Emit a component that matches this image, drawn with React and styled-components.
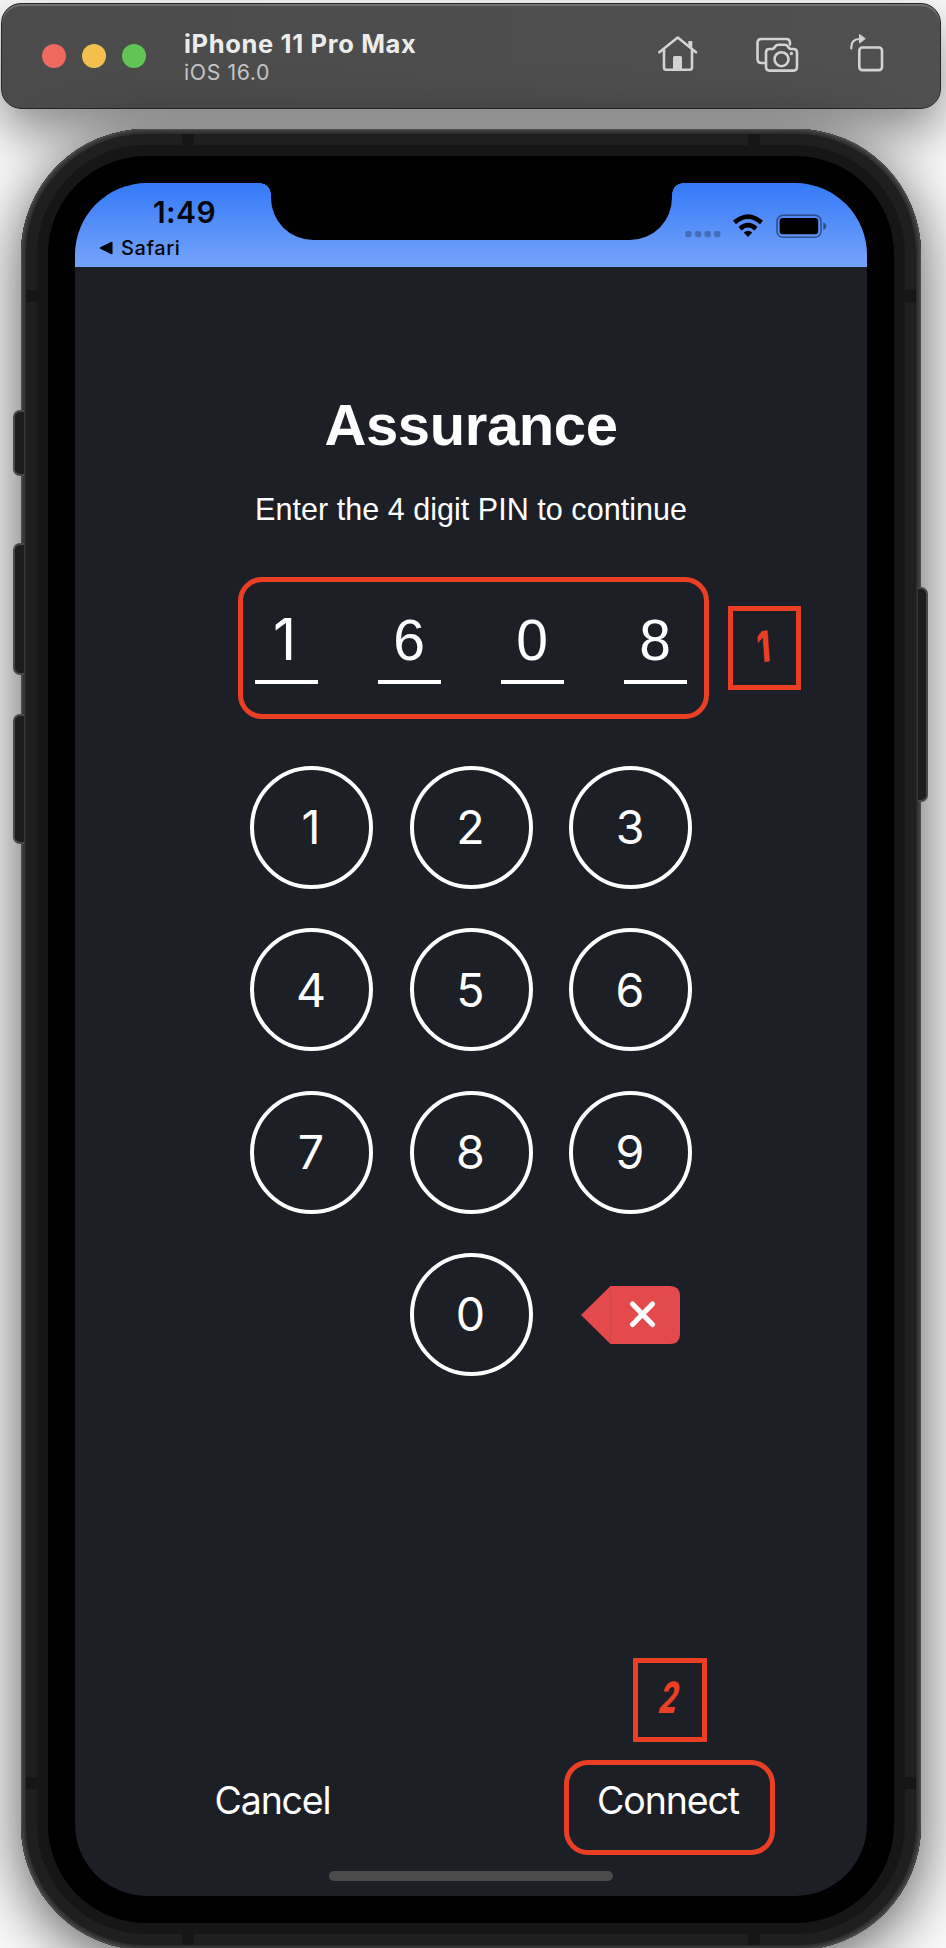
import React from "react";
import styled, { createGlobalStyle } from "styled-components";

const RED = "#eb3f24";
const UI = 'Inter, "Liberation Sans", sans-serif';
const HELV = '"Liberation Sans", Arial, sans-serif';

const GlobalStyle = createGlobalStyle`
  *, *::before, *::after { box-sizing: border-box; }
  body { margin: 0; background: #fafafa; }
  button { font: inherit; color: inherit; background: none; border: 0; padding: 0; margin: 0; }
`;

const Desktop = styled.main`
  width: 946px;
  height: 1948px;
  overflow: hidden;
  padding-top: 3px;
  background: #fafafa;
  font-family: ${UI};
  color: #fff;
`;

const Toolbar = styled.header`
  display: flex;
  align-items: center;
  width: 940px;
  height: 106px;
  margin-left: 1px;
  padding: 0 56px 0 40px;
  border: 1px solid #262626;
  border-radius: 20px;
  background: linear-gradient(90deg, #4b4b4b, #505050);
  box-shadow: inset 0 2px 1px #747474, 0 22px 50px rgba(0, 0, 0, 0.45);
`;

const Lights = styled.div`
  display: flex;
  gap: 16px;
`;

const Light = styled.span`
  width: 24px;
  height: 24px;
  border-radius: 50%;
  background: ${(p) => p.$color};
`;

const Titles = styled.div`
  display: flex;
  flex-direction: column;
  margin: 2px auto 0 38px;
  white-space: nowrap;
`;

const DeviceName = styled.span`
  font-size: 25.5px;
  line-height: 29px;
  font-weight: 700;
  letter-spacing: 0.65px;
  color: #ececec;
`;

const OsName = styled.span`
  font-size: 21.3px;
  line-height: 28px;
  letter-spacing: 0.6px;
  color: #c6c6c6;
`;

const Tools = styled.div`
  display: flex;
  align-items: center;
  padding-bottom: 4px;
`;

const ToolIcon = styled.svg`
  display: block;
  width: ${(p) => p.$w}px;
  height: 40px;
  margin-left: ${(p) => p.$gap || 0}px;
  fill: none;
  stroke: #d3d3d3;
  stroke-width: 2.6;
  stroke-linecap: round;
  stroke-linejoin: round;
`;

const Phone = styled.section`
  position: relative;
  width: 900px;
  height: 1821px;
  margin: 20px 0 0 21px;
  padding: 54px;
  border-radius: 125px;
  background: #000;
  box-shadow:
    inset 0 0 0 1px #4c4c4c,
    inset 0 0 0 2px #404040,
    inset 0 0 0 4px #353535,
    inset 0 0 0 5px #2a2a2a,
    inset 0 0 0 16px #1f1f1f,
    inset 0 0 0 27px #161616,
    0 12px 62px rgba(0, 0, 0, 0.66);
`;

const SideButton = styled.i`
  position: absolute;
  top: ${(p) => p.$top}px;
  ${(p) => p.$side}: ${(p) => (p.$side === "left" ? -8 : -7)}px;
  width: ${(p) => (p.$side === "left" ? 11 : 10)}px;
  height: ${(p) => p.$h}px;
  border: 2px solid #484848;
  border-${(p) => (p.$side === "left" ? "right" : "left")}: 0;
  border-radius: ${(p) => (p.$side === "left" ? "7px 0 0 7px" : "0 7px 7px 0")};
  background: #1d1d1d;
`;

const Band = styled.i`
  position: absolute;
  background: #161616;
  ${(p) => p.$v}: ${(p) => (p.$flat ? 5 : 161)}px;
  ${(p) => p.$h}: ${(p) => (p.$flat ? 161 : 5)}px;
  width: ${(p) => (p.$flat ? 12 : 11)}px;
  height: ${(p) => (p.$flat ? 11 : 12)}px;
`;

const Screen = styled.div`
  display: flex;
  flex-direction: column;
  align-items: center;
  width: 792px;
  height: 1713px;
  overflow: hidden;
  border-radius: 72px;
  background: #1d1f27;
`;

const StatusBar = styled.div`
  display: flex;
  justify-content: space-between;
  width: 100%;
  height: 84px;
  flex: none;
  background: linear-gradient(#357af8, #75a3f9);
  color: #05070c;
`;

const StatusLeft = styled.div`
  width: 196px;
  padding: 11px 0 0 24px;
`;

const Clock = styled.div`
  padding-left: 54px;
  font-size: 30px;
  line-height: 37px;
  font-weight: 600;
  letter-spacing: 0.4px;
`;

const BackLink = styled.div`
  display: flex;
  align-items: center;
  gap: 8px;
  margin-top: 5px;
  font-size: 20px;
  line-height: 24px;
  font-weight: 500;
  letter-spacing: 0.6px;
`;

const Notch = styled.div`
  position: relative;
  width: 401px;
  height: 57px;
  border-radius: 0 0 42px 42px;
  background: #000;
  &::before, &::after {
    content: "";
    position: absolute;
    top: 0;
    width: 11px;
    height: 11px;
  }
  &::before { left: -11px; background: radial-gradient(circle at 0 100%, transparent 10.5px, #000 11px); }
  &::after { right: -11px; background: radial-gradient(circle at 100% 100%, transparent 10.5px, #000 11px); }
`;

const StatusRight = styled.div`
  width: 195px;
  padding: 29px 0 0 13px;
`;

const StatusIcons = styled.svg`
  display: block;
  width: 145px;
  height: 28px;
`;

const Heading = styled.h1`
  margin: 125px 0 0;
  font: 700 58px/66px ${HELV};
  letter-spacing: -0.4px;
`;

const Hint = styled.p`
  margin: 33px 0 0;
  font: 400 30.5px/36px ${HELV};
  letter-spacing: 0.04px;
  white-space: nowrap;
`;

const PinBox = styled.div`
  display: flex;
  gap: 60px;
  align-self: flex-start;
  width: 471px;
  height: 142px;
  margin: 50px 0 47px 163px;
  padding: 27px 0 0 12px;
  border: 5px solid ${RED};
  border-radius: 24px;
`;

const PinDigit = styled.span`
  width: 63px;
  height: 75px;
  padding-top: 1px;
  border-bottom: 4px solid #fff;
  text-align: center;
  text-indent: ${(p) => (p.$footless ? -4 : -1)}px;
  font: 400 57px/60px ${(p) => (p.$footless ? UI : HELV)};
`;

const Keypad = styled.div`
  display: grid;
  grid-template-columns: repeat(3, 123px);
  grid-auto-rows: 123px;
  gap: 39.4px 36.5px;
`;

const Key = styled.button`
  grid-column: ${(p) => p.$column || "auto"};
  display: flex;
  align-items: center;
  justify-content: center;
  border: 4px solid #fff;
  border-radius: 50%;
  font-size: 46.5px;
  line-height: 1;
  text-indent: -1px;
`;

const DeleteKey = styled.button`
  display: flex;
  align-items: center;
  justify-content: center;
`;

const Actions = styled.div`
  display: flex;
  align-self: flex-start;
  justify-content: space-between;
  width: 570px;
  margin: auto 0 0 130px;
`;

const Action = styled.button`
  width: ${(p) => p.$w}px;
  height: 95px;
  padding-bottom: 14px;
  border: 5px solid ${(p) => (p.$marked ? RED : "transparent")};
  border-radius: 24px;
  font-size: 37.5px;
  line-height: 46px;
  letter-spacing: ${(p) => p.$track}px;
  text-indent: ${(p) => (p.$marked ? -3 : -1)}px;
`;

const HomeIndicator = styled.div`
  width: 284px;
  height: 10px;
  flex: none;
  margin: 16px 0 15px;
  border-radius: 5px;
  background: #4b4b4b;
`;

const Marker = styled.div`
  position: absolute;
  left: ${(p) => p.$x}px;
  top: ${(p) => p.$y}px;
  width: ${(p) => p.$w}px;
  height: 84px;
  display: flex;
  align-items: center;
  justify-content: center;
  border: 5px solid ${RED};
  color: ${RED};
  font: 800 43px/1 ${UI};
`;

const MarkerDigit = styled.span`
  display: block;
  transform: ${(p) => p.$t};
`;

export default function App() {
  return (
    <Desktop>
      <GlobalStyle />
      <Toolbar>
        <Lights>
          <Light $color="#ee6a5f" />
          <Light $color="#f5bf4f" />
          <Light $color="#61c555" />
        </Lights>
        <Titles>
          <DeviceName>iPhone 11 Pro Max</DeviceName>
          <OsName>iOS 16.0</OsName>
        </Titles>
        <Tools>
          <ToolIcon $w={42} viewBox="656 34 42 40">
            <path d="M659.3 52.3 677.7 37.6 696 52.3" />
            <path d="M664 50V67.5Q664 69.7 666.2 69.7H689.8Q692 69.7 692 67.5V50" />
            <path d="M690.3 47.5V41" strokeWidth="4" strokeLinecap="butt" />
            <path d="M673 57.5q0-1.5 1.5-1.5h6q1.5 0 1.5 1.5V70h-9z" fill="#d3d3d3" stroke="none" />
          </ToolIcon>
          <ToolIcon $w={46} $gap={57} viewBox="755 34 46 40">
            <path d="M764 63h-2.500q-4 0-4-4V43q0-4 4-4h24.500q4 0 4 4v1.500" />
            <path d="M769.5 49h2.500q1.500 0 2.300-1.300l1.200-1.600q1-1.300 2.800-1.300h6.500q1.800 0 2.800 1.300l1.200 1.600q.8 1.300 2.300 1.300h2.400q3.500 0 3.500 3.500V67q0 3.600-3.500 3.600H769.500q-3.500 0-3.500-3.600V52.500Q766 49 769.500 49z" />
            <circle cx="781.5" cy="59.2" r="7" />
            <circle cx="791.4" cy="53.5" r="1.7" fill="#d3d3d3" stroke="none" />
          </ToolIcon>
          <ToolIcon $w={35} $gap={48} viewBox="849 33 35 40">
            <path d="M851.3 47.5v-1.5q0-7.500 8-8h1" strokeWidth="2.2" />
            <path d="M859.5 33.8v8.200l5.500-4.100z" fill="#d3d3d3" strokeWidth="1" />
            <rect x="859.3" y="46.5" width="22.7" height="22.6" rx="3" />
          </ToolIcon>
        </Tools>
      </Toolbar>

      <Phone>
        <SideButton $side="left" $top={281} $h={66} />
        <SideButton $side="left" $top={414} $h={132} />
        <SideButton $side="left" $top={585} $h={130} />
        <SideButton $side="right" $top={458} $h={215} />
        {["top", "bottom"].map((v) =>
          ["left", "right"].map((h) => (
            <React.Fragment key={v + h}>
              <Band $v={v} $h={h} $flat />
              <Band $v={v} $h={h} />
            </React.Fragment>
          ))
        )}
        <Screen>
          <StatusBar>
            <StatusLeft>
              <Clock>1:49</Clock>
              <BackLink>
                <svg width="14" height="14" viewBox="0 0 14 14">
                  <path d="M1.5 7 12.8 1.5v11z" fill="#05070c" stroke="#05070c" strokeWidth="1.5" strokeLinejoin="round" />
                </svg>
                Safari
              </BackLink>
            </StatusLeft>
            <Notch />
            <StatusRight>
              <StatusIcons viewBox="685 212 145 28">
                {[685.3, 695, 704.5, 714].map((x) => (
                  <rect key={x} x={x} y="231" width="6.3" height="6.3" rx="1.8" fill="#000" fillOpacity=".25" />
                ))}
                <g fill="none" stroke="#000" strokeWidth="4.6">
                  <path d="M734.5 222.6Q748 210.7 761.5 222.6" />
                  <path d="M740 228.7Q748 221.7 756 228.7" />
                </g>
                <path d="M743.7 232.5q4.300-3.500 8.600 0L748 237z" fill="#000" />
                <rect x="777" y="215.2" width="44" height="22" rx="6" fill="none" stroke="#000" strokeOpacity=".45" strokeWidth="1.6" />
                <rect x="779.6" y="217.9" width="38.6" height="16.4" rx="3.2" fill="#000" />
                <path d="M823.3 222.5q3 1 3 3.700t-3 3.700z" fill="#000" fillOpacity=".45" />
              </StatusIcons>
            </StatusRight>
          </StatusBar>

          <Heading>Assurance</Heading>
          <Hint>Enter the 4 digit PIN to continue</Hint>
          <PinBox>
            {["1", "6", "0", "8"].map((d) => (
              <PinDigit key={d} $footless={d === "1"}>{d}</PinDigit>
            ))}
          </PinBox>

          <Keypad>
            {["1", "2", "3", "4", "5", "6", "7", "8", "9"].map((n) => (
              <Key key={n}>{n}</Key>
            ))}
            <Key $column={2}>0</Key>
            <DeleteKey aria-label="Delete">
              <svg width="99" height="58" viewBox="0 0 99 58">
                <path d="M29.5 0H89q10 0 10 10V48q0 10-10 10H29.500L0 29z" fill="#e44a4c" />
                <path d="M29.5 0V58" stroke="#cf4647" strokeWidth="1" />
                <path d="M51.5 18 71.5 38.5M71.5 18 51.5 38.5" stroke="#fff" strokeWidth="5.2" strokeLinecap="round" />
              </svg>
            </DeleteKey>
          </Keypad>

          <Actions>
            <Action $w={136} $track={-1.2}>Cancel</Action>
            <Action $w={211} $track={-1.1} $marked>Connect</Action>
          </Actions>
          <HomeIndicator />
        </Screen>
        <Marker $x={707} $y={477} $w={73}>
          <MarkerDigit $t="translate(-1px, -2px) scaleX(0.7) rotate(-6deg)">1</MarkerDigit>
        </Marker>
        <Marker $x={611.5} $y={1529} $w={74}>
          <MarkerDigit $t="translate(0, -3px) skewX(-14deg) scaleX(0.65)">2</MarkerDigit>
        </Marker>
      </Phone>
    </Desktop>
  );
}
